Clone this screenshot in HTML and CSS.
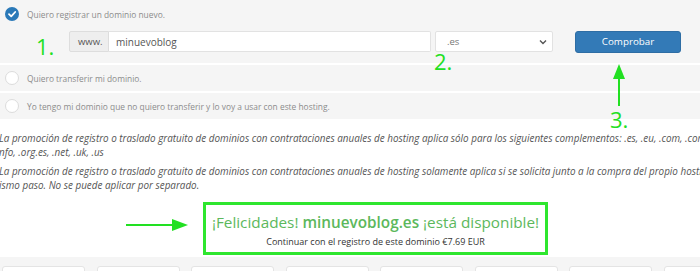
FILE: index.html
```html
<!DOCTYPE html>
<html>
<head>
    <title>Dominio</title>
    <link rel="stylesheet" href="styles.css">
</head>
<body>
    <div class="panel">
        <div class="option">
            <div class="choice">
                <span class="check checked">
                    <svg width="14" height="14" viewBox="0 0 14 14"><path d="M4 7.2 L6.2 9.3 L10.2 5" fill="none" stroke="#fff" stroke-width="1.8" stroke-linecap="round" stroke-linejoin="round"/></svg>
                </span>
                <span class="label">Quiero registrar un dominio nuevo.</span>
            </div>
            <div class="domain-row">
                <div class="input-group">
                    <span class="addon">www.</span>
                    <span class="field">minuevoblog</span>
                </div>
                <div class="select">
                    <span>.es</span>
                    <svg width="8" height="6" viewBox="0 0 8 6"><path d="M1 1.5 L4 4.5 L7 1.5" fill="none" stroke="#555" stroke-width="1.4"/></svg>
                </div>
                <button class="btn">Comprobar</button>
            </div>
        </div>
        <div class="option">
            <div class="choice">
                <span class="check"></span>
                <span class="label">Quiero transferir mi dominio.</span>
            </div>
        </div>
        <div class="option">
            <div class="choice">
                <span class="check"></span>
                <span class="label">Yo tengo mi dominio que no quiero transferir y lo voy a usar con este hosting.</span>
            </div>
        </div>
    </div>

    <div class="notes">
        <p>La promoción de registro o traslado gratuito de dominios con contrataciones anuales de hosting aplica sólo para los siguientes complementos: .es, .eu, .com, .com.es, .<br>nfo, .org.es, .net, .uk, .us</p>
        <p>La promoción de registro o traslado gratuito de dominios con contrataciones anuales de hosting solamente aplica si se solicita junto a la compra del propio hosting en el<br>ismo paso. No se puede aplicar por separado.</p>
    </div>

    <div class="result-row">
        <svg class="arrow-right" width="62" height="12" viewBox="0 0 62 12"><path d="M0 6 H48" stroke="#22e022" stroke-width="2"/><path d="M46 0 L62 6 L46 12 Z" fill="#22e022"/></svg>
        <div class="result">
            <div class="result-title">¡Felicidades! <b>minuevoblog.es</b> ¡está disponible!</div>
            <div class="result-sub">Continuar con el registro de este dominio €7.69 EUR</div>
        </div>
    </div>

    <div class="tabs">
        <div class="tab"></div>
        <div class="tab"></div>
        <div class="tab"></div>
        <div class="tab"></div>
        <div class="tab"></div>
        <div class="tab"></div>
        <div class="tab"></div>
        <div class="tab"></div>
    </div>

    <!-- annotations -->
    <span class="step step-1">1.</span>
    <span class="step step-2">2.</span>
    <span class="step step-3">3.</span>
    <svg class="arrow-up" width="12" height="42" viewBox="0 0 12 42"><path d="M6 12 V42" stroke="#22e022" stroke-width="2"/><path d="M0 15 L6 0 L12 15 Z" fill="#22e022"/></svg>
</body>
</html>
```

FILE: styles.css
```css
body {
    margin: 0;
    font-family: "Open Sans", "DejaVu Sans", sans-serif;
    background-color: #fff;
    overflow: hidden;
    position: relative;
    height: 271px;
}
.panel {
    background-color: #f5f5f5;
}
.option {
    padding: 6px 0 6px 5px;
    border-top: 2px solid #fff;
}
.option:first-child {
    border-top: none;
    padding: 7px 0 11px 5px;
}
.choice {
    display: flex;
    align-items: center;
    gap: 8px;
    height: 14px;
}
.check {
    width: 12px;
    height: 12px;
    border: 1px solid #dcdcdc;
    border-radius: 50%;
    background-color: #fff;
    display: flex;
}
.check.checked {
    width: 14px;
    height: 14px;
    border: none;
    background-color: #2a79b8;
}
.label {
    font-size: 8.4px;
    color: #8c8c8c;
}
.domain-row {
    display: flex;
    align-items: center;
    margin: 10px 0 0 64px;
    height: 21px;
}
.input-group {
    display: flex;
    height: 21px;
    width: 362px;
}
.addon {
    width: 40px;
    padding-left: 8px;
    box-sizing: border-box;
    background-color: #eee;
    border: 1px solid #ddd;
    border-radius: 2px 0 0 2px;
    font-size: 9.5px;
    color: #555;
    display: flex;
    align-items: center;
}
.field {
    flex: 1;
    background-color: #fff;
    border: 1px solid #e2e2e2;
    border-left: none;
    border-radius: 0 2px 2px 0;
    padding-left: 7px;
    font-size: 10px;
    color: #555;
    display: flex;
    align-items: center;
}
.select {
    margin-left: 4px;
    width: 118px;
    height: 21px;
    box-sizing: border-box;
    background-color: #fff;
    border: 1px solid #e2e2e2;
    border-radius: 2px;
    padding: 0 5px 0 11px;
    display: flex;
    align-items: center;
    justify-content: space-between;
    font-size: 9.5px;
    color: #777;
}
.btn {
    margin-left: 22px;
    width: 106px;
    height: 22px;
    background-color: #337ab7;
    border: 1px solid #2e6da4;
    border-radius: 3px;
    color: #fff;
    font-family: "Open Sans", sans-serif;
    font-size: 9.8px;
    padding: 0;
}
.notes {
    margin: 12px 0 0 -1px;
    width: 760px;
}
.notes p {
    margin: 0 0 5px;
    font-size: 9.9px;
    line-height: 14px;
    font-style: italic;
    color: #555;
    white-space: nowrap;
}
.result-row {
    display: flex;
    align-items: center;
    gap: 15px;
    padding-left: 126px;
    margin-top: 10px;
}
.arrow-right {
    margin-top: -7px;
}
.result {
    width: 345px;
    height: 53px;
    box-sizing: border-box;
    border: 3px solid #2ee62e;
    padding-top: 7px;
    text-align: center;
}
.result-title {
    font-size: 15.3px;
    line-height: 20px;
    color: #5cb85c;
}
.result-title b {
    font-weight: 600;
}
.result-sub {
    margin-top: 4px;
    font-size: 9px;
    line-height: 12px;
    color: #333;
}
.tabs {
    margin-top: 2px;
    background-color: #f5f5f5;
    padding: 9px 0 0 2px;
    display: flex;
    gap: 11.5px;
}
.tab {
    flex: none;
    width: 81px;
    height: 20px;
    background-color: #fff;
    border: 1px solid #e4e4e4;
    border-radius: 3px;
}
.step {
    position: absolute;
    font-size: 22px;
    line-height: 22px;
    color: #22e022;
}
.step-1 { left: 36px; top: 35px; }
.step-2 { left: 434px; top: 50px; }
.step-3 { left: 610px; top: 108px; }
.arrow-up {
    position: absolute;
    left: 613px;
    top: 64px;
}
```
